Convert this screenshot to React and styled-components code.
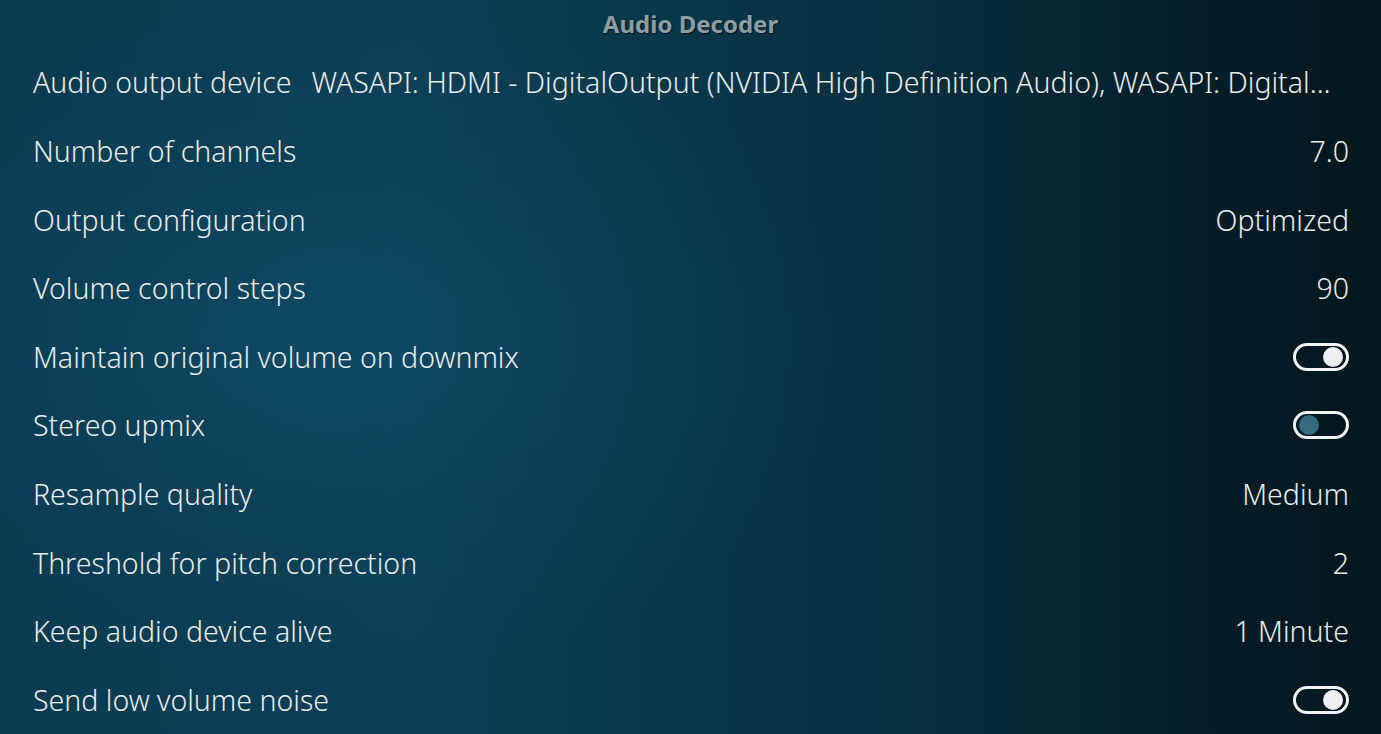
import React from "react";
import styled, { createGlobalStyle } from "styled-components";

const GlobalStyle = createGlobalStyle`
  html, body {
    margin: 0;
    padding: 0;
    height: 100%;
  }
  body {
    font-family: "Noto Sans", "Open Sans", sans-serif;
    background: #03202a;
  }
`;

const settings = [
  {
    label: "Audio output device",
    value: "WASAPI: HDMI - DigitalOutput (NVIDIA High Definition Audio), WASAPI: Digital...",
    wide: true
  },
  { label: "Number of channels", value: "7.0" },
  { label: "Output configuration", value: "Optimized" },
  { label: "Volume control steps", value: "90" },
  { label: "Maintain original volume on downmix", toggle: true, on: true },
  { label: "Stereo upmix", toggle: true, on: false },
  { label: "Resample quality", value: "Medium" },
  { label: "Threshold for pitch correction", value: "2" },
  { label: "Keep audio device alive", value: "1 Minute" },
  { label: "Send low volume noise", toggle: true, on: true }
];

const App = () => (
  <>
    <GlobalStyle />
    <Screen>
      <Header>Audio Decoder</Header>
      <List>
        {settings.map(item => (
          <Row key={item.label}>
            <Label>{item.label}</Label>
            {item.toggle ? (
              <Toggle on={item.on ? 1 : 0}>
                <Knob on={item.on ? 1 : 0} />
              </Toggle>
            ) : (
              <Value wide={item.wide ? 1 : 0}>{item.value}</Value>
            )}
          </Row>
        ))}
      </List>
    </Screen>
  </>
);

const Screen = styled.div`
  width: 1381px;
  height: 734px;
  overflow: hidden;
  display: flex;
  flex-direction: column;
  background:
    radial-gradient(ellipse 520px 340px at 330px 340px, rgba(14, 74, 100, 0.9) 0%, rgba(12, 68, 92, 0.5) 50%, rgba(12, 68, 92, 0) 100%),
    linear-gradient(90deg, #0a3b50 0%, #0b3f56 30%, #07303f 65%, #031c25 90%, #02161d 100%);
`;

const Header = styled.div`
  height: 50px;
  display: flex;
  align-items: center;
  justify-content: center;
  font-size: 24px;
  font-weight: 700;
  color: #8e9da3;
  text-shadow: 1px 1px 1px rgba(0, 0, 0, 0.6);
  box-sizing: border-box;
`;

const List = styled.div`
  display: flex;
  flex-direction: column;
  padding: 2px 32px 0 33px;
`;

const Row = styled.div`
  height: 68.6px;
  display: flex;
  align-items: center;
  justify-content: space-between;
  gap: 20px;
  color: #e9ebeb;
  font-size: 28.5px;
  font-weight: 300;
`;

const Label = styled.span`
  white-space: nowrap;
  flex-shrink: 0;
`;

const Value = styled.span`
  white-space: nowrap;
  overflow: hidden;
  text-overflow: ellipsis;
  text-align: ${p => (p.wide ? "left" : "right")};
  flex: ${p => (p.wide ? "1" : "0 0 auto")};
`;

const Toggle = styled.div`
  width: 56px;
  height: 28px;
  box-sizing: border-box;
  border: 3px solid #f2f2f2;
  border-radius: 14px;
  display: flex;
  align-items: center;
  justify-content: ${p => (p.on ? "flex-end" : "flex-start")};
  padding: 0 3px;
`;

const Knob = styled.div`
  width: 20px;
  height: 20px;
  border-radius: 50%;
  background: ${p => (p.on ? "#efefef" : "#356a7f")};
`;

export default App;
